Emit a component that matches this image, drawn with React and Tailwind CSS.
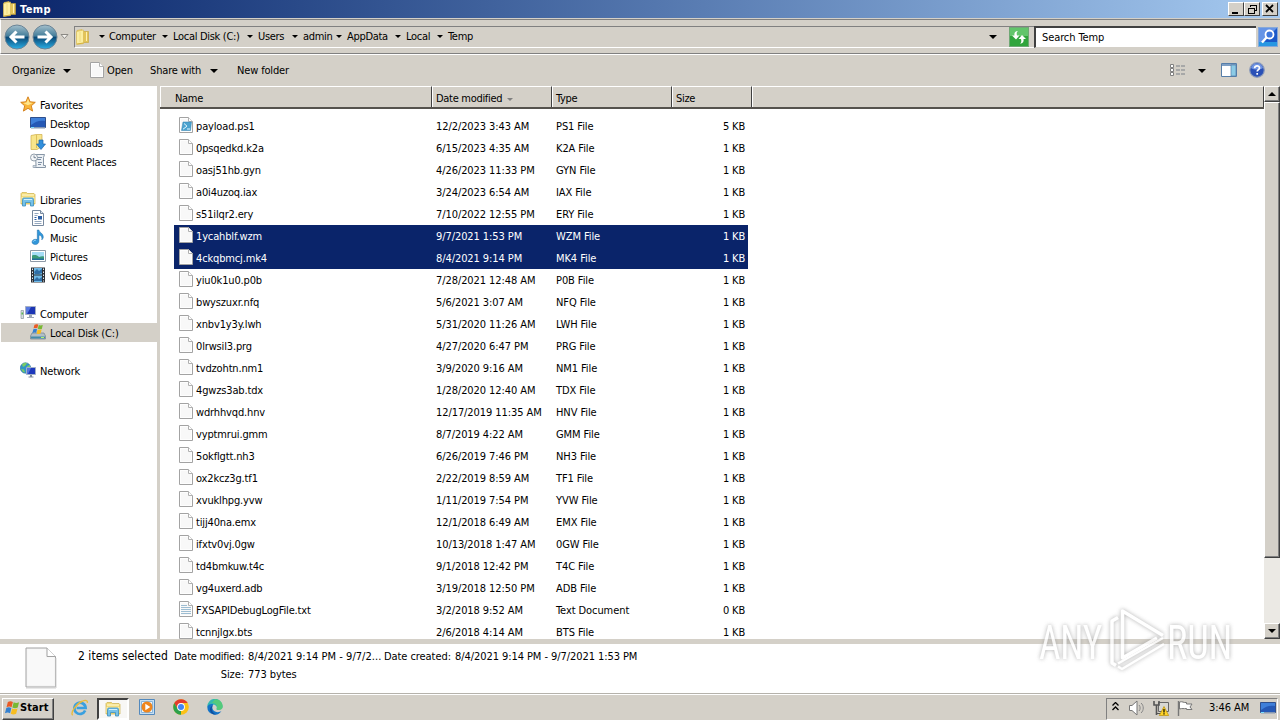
import { useId } from "react";

const files = [
  ["payload.ps1", "12/2/2023 3:43 AM", "PS1 File", "5 KB"],
  ["0psqedkd.k2a", "6/15/2023 4:35 AM", "K2A File", "1 KB"],
  ["oasj51hb.gyn", "4/26/2023 11:33 PM", "GYN File", "1 KB"],
  ["a0i4uzoq.iax", "3/24/2023 6:54 AM", "IAX File", "1 KB"],
  ["s51ilqr2.ery", "7/10/2022 12:55 PM", "ERY File", "1 KB"],
  ["1ycahblf.wzm", "9/7/2021 1:53 PM", "WZM File", "1 KB"],
  ["4ckqbmcj.mk4", "8/4/2021 9:14 PM", "MK4 File", "1 KB"],
  ["yiu0k1u0.p0b", "7/28/2021 12:48 AM", "P0B File", "1 KB"],
  ["bwyszuxr.nfq", "5/6/2021 3:07 AM", "NFQ File", "1 KB"],
  ["xnbv1y3y.lwh", "5/31/2020 11:26 AM", "LWH File", "1 KB"],
  ["0lrwsil3.prg", "4/27/2020 6:47 PM", "PRG File", "1 KB"],
  ["tvdzohtn.nm1", "3/9/2020 9:16 AM", "NM1 File", "1 KB"],
  ["4gwzs3ab.tdx", "1/28/2020 12:40 AM", "TDX File", "1 KB"],
  ["wdrhhvqd.hnv", "12/17/2019 11:35 AM", "HNV File", "1 KB"],
  ["vyptmrui.gmm", "8/7/2019 4:22 AM", "GMM File", "1 KB"],
  ["5okflgtt.nh3", "6/26/2019 7:46 PM", "NH3 File", "1 KB"],
  ["ox2kcz3g.tf1", "2/22/2019 8:59 AM", "TF1 File", "1 KB"],
  ["xvuklhpg.yvw", "1/11/2019 7:54 PM", "YVW File", "1 KB"],
  ["tijj40na.emx", "12/1/2018 6:49 AM", "EMX File", "1 KB"],
  ["ifxtv0vj.0gw", "10/13/2018 1:47 AM", "0GW File", "1 KB"],
  ["td4bmkuw.t4c", "9/1/2018 12:42 PM", "T4C File", "1 KB"],
  ["vg4uxerd.adb", "3/19/2018 12:50 PM", "ADB File", "1 KB"],
  ["FXSAPIDebugLogFile.txt", "3/2/2018 9:52 AM", "Text Document", "0 KB"],
  ["tcnnjlgx.bts", "2/6/2018 4:14 AM", "BTS File", "1 KB"],
];

const selected = ["1ycahblf.wzm", "4ckqbmcj.mk4"];

const crumbs = [
  ["Computer", "w-16"],
  ["Local Disk (C:)", "w-[85px]"],
  ["Users", "w-[45px]"],
  ["admin", "w-11"],
  ["AppData", "w-[59px]"],
  ["Local", "w-[42px]"],
];

const Svg = ({ size = 16, className = "", children }) => (
  <svg width={size} height={size} viewBox="0 0 16 16" className={`shrink-0 ${className}`}>
    {children}
  </svg>
);

const Arrow = ({ className = "text-black" }) => (
  <svg width="8" height="4" viewBox="0 0 8 4" className={`shrink-0 ${className}`}>
    <path d="M0 0h8L4 4z" fill="currentColor" />
  </svg>
);

const SmallArrow = ({ className = "text-black" }) => (
  <svg width="6" height="3" viewBox="0 0 6 3" className={`shrink-0 ${className}`}>
    <path d="M0 0h6L3 3z" fill="currentColor" />
  </svg>
);

const FolderIcon = ({ size = 16 }) => (
  <Svg size={size}>
    <path d="M2 1.5 7 .5v12l-5 2z" fill="#f6e07c" stroke="#d1b045" strokeWidth=".6" />
    <path d="M8 2.5h5.5v11H8z" fill="#e3c458" stroke="#c6a238" strokeWidth=".6" />
    <path d="M1.5 2.5 8.5 1v13.5l-7 1z" fill="#fbeea2" stroke="#d8b94f" strokeWidth=".6" />
    <path d="M11.5 3v9" stroke="#fff0b0" />
    <path d="M5 3v10" stroke="#f0db80" />
    <path d="M2 14.5 8.5 13.5v1L2 15.5z" fill="#d5b23c" />
  </Svg>
);

const PageIcon = ({ kind }) => (
  <svg width="14" height="16" viewBox="0 0 14 16" className="mb-0.5 shrink-0">
    <path d="M.5.5h9l4 4v11H.5z" fill="#fefefe" stroke="#a3a3a3" />
    <path d="M2 2h7v3h3v9H2z" fill="#f8f8f8" />
    <path d="M9.5.5v4h4" fill="#fff" stroke="#b0b0b0" />
    {kind === "txt" && <path d="M2 4.5h6M2 6.5h10M2 8.5h10M2 10.5h10M2 12.5h10" stroke="#9dbdd2" />}
    {kind === "ps1" && (
      <g>
        <path d="M4 5h8.5l-1 8.5h-9z" fill="#4ba3cf" stroke="#2c7fae" strokeWidth=".5" />
        <path d="m5 6.5 3 2.7-4 3M8 12h3" stroke="#e4f6ff" fill="none" />
      </g>
    )}
  </svg>
);

const StarIcon = () => (
  <Svg>
    <path d="m8 .8 2.1 5 5.2.5-4 3.5 1.3 5.3L8 12.3l-4.6 2.8 1.3-5.3-4-3.5 5.2-.5z" fill="#f9b53a" stroke="#d17a14" strokeWidth=".9" />
    <path d="M8 2.8 9.4 6.6l3.4.4L8 9.3 3.2 7l3.4-.4z" fill="#ffe68d" />
  </Svg>
);

const DesktopIcon = () => (
  <Svg>
    <path d="M.5 2.5h15v10H.5z" fill="#2558b5" stroke="#2f4f8c" />
    <path d="M1 3h14v3C10 5 6 6 1 10z" fill="#3f7fd9" />
    <path d="M1 12h14v1.5H1z" fill="#8798b2" />
    <path d="M1 12.5h3" stroke="#7ce0ff" />
  </Svg>
);

const DownloadsIcon = () => (
  <Svg>
    <path d="M1 1.5 6 .5h6v12l-5 3H1z" fill="#f8e58b" stroke="#cfae48" strokeWidth=".7" />
    <path d="M6.5 1v13" stroke="#dcbf58" />
    <path d="M9 6h4v4h2.5L11 15.5 6.5 10H9z" fill="#318fdc" stroke="#1c64aa" strokeWidth=".7" />
  </Svg>
);

const RecentIcon = () => (
  <Svg>
    <path d="M5.5 1.5h9l-1 3v8h2v2h-11l1.5-2z" fill="#edf1f5" stroke="#8796a6" />
    <path d="M7 4.5h5M7 6.5h4M8 9.5h4M8 11.5h3" stroke="#7f90a5" />
    <circle cx="4" cy="4.5" r="3.5" fill="#f5f7f9" stroke="#93a0ac" />
    <path d="M4 2.5v2.2h2" stroke="#58697d" fill="none" strokeWidth=".8" />
    <path d="M3 12.5h3v2H3z" fill="#d2dae2" stroke="#8796a6" strokeWidth=".6" />
  </Svg>
);

const LibraryIcon = ({ size = 16 }) => (
  <Svg size={size}>
    <path d="M1 2.5 2 1.5h4.5l1 1H14l1 1V13H1z" fill="#f3dc7b" stroke="#ccb04c" strokeWidth=".7" />
    <path d="M2 4h12" stroke="#fffbd8" />
    <path d="M1.5 6h13v6h-13z" fill="#f9eda9" />
    <path d="M2.5 8.5c0-1 .5-1.5 1.5-1.5h8c1 0 1.5.5 1.5 1.5V15h-3v-3.5h-5V15h-3z" fill="#75c1e9" stroke="#3b8dbb" strokeWidth=".8" />
    <path d="M4 8.5h8" stroke="#d1f1ff" />
  </Svg>
);

const DocumentsIcon = () => (
  <Svg>
    <path d="M2.5.5h8l3 3v12h-11z" fill="#fff" stroke="#76889e" />
    <path d="M10.5.5v3h3" fill="#dce5ef" stroke="#76889e" />
    <path d="M4.5 3.5h4M4.5 5.5h3M4.5 11.5h7M4.5 13.5h7" stroke="#94a8c0" />
    <path d="M8 6h4v3.5H8z" fill="#2c5fa5" />
    <path d="M4.5 7.5h2M4.5 9.5h2" stroke="#2c5fa5" />
  </Svg>
);

const MusicIcon = () => (
  <Svg>
    <path d="M7.3 1h1.6c.3 2.6 4.8 3.4 4.4 7.3-.2 1.2-.9 2-1.5 2.6.7-2.6-.7-4.5-2.9-4.9v6.2c0 1.9-1.5 3.3-3.5 3.3S2 14.5 2 13s1.5-2.7 3.5-2.7c.7 0 1.3.1 1.8.3z" fill="#3197da" stroke="#1d6da8" strokeWidth=".5" />
    <path d="M3.3 12.5c.4-.9 1.2-1.2 2.4-1.2" stroke="#a6e0ff" fill="none" />
  </Svg>
);

const PicturesIcon = () => (
  <Svg>
    <path d="M.5 2.5h15v11H.5z" fill="#fff" stroke="#8f9aa7" />
    <path d="M2 4h12v8H2z" fill="#a5dcf5" />
    <path d="M2 7.5c3-1 5-.5 7 1.5 2-1 4-1 5-.5V12H2z" fill="#3b9a79" />
    <path d="M2 10.5h12V12H2z" fill="#226d9d" />
  </Svg>
);

const VideosIcon = () => (
  <Svg>
    <path d="M1 .5h14v15H1z" fill="#2c3036" />
    <path d="M4 1h8v6.5H4zM4 8.5h8V15H4z" fill="#6fb9e6" />
    <path d="m4 5 3-3 2 2 3-2v4L9 7H5zM4 13l3-3 2 2 3-2v4H4z" fill="#2f6ea6" />
    <path d="M2.5 1.5v13M13.5 1.5v13" stroke="#e6edf2" strokeDasharray="1.5 1.5" />
  </Svg>
);

const ComputerIcon = () => (
  <Svg>
    <path d="M5.5 1.5h10v8h-10z" fill="#1c35b4" stroke="#a5afc4" />
    <path d="M6 2h5L7 9H6z" fill="#5778e0" />
    <path d="M9 10h3v2h2v1H7v-1h2z" fill="#9ca6b5" />
    <path d="M1 5.5h2.5v8H1z" fill="#d6dde0" stroke="#8a959d" strokeWidth=".7" />
    <path d="M1.5 8.5H3" stroke="#59bb4e" strokeWidth="2" />
  </Svg>
);

const Flag = ({ transform }) => (
  <g transform={transform}>
    <path d="M3 1c1.5-1 3-1 4.500-.2L6.300 5.500C5 4.700 3.500 4.700 1.800 5.500z" fill="#ea5a25" />
    <path d="M8.200 1.200c1.500.8 3 .8 4.800 0l-1.200 4.700c-1.800.8-3.300.7-4.800-.1z" fill="#78b833" />
    <path d="M1.600 6.300c1.500-.9 3-.8 4.500 0L5 10.900C3.500 10.100 2 10.100.4 11z" fill="#3480d0" />
    <path d="M6.800 6.600c1.500.8 3 .9 4.800.1l-1.200 4.700c-1.800.8-3.300.7-4.800-.1z" fill="#f7bd21" />
  </g>
);

const DiskIcon = () => (
  <Svg>
    <path d="M2 9h12l1.500 3v3H.5v-3z" fill="#b1bec6" stroke="#72828d" strokeWidth=".7" />
    <path d="M1 12.500h14v2H1z" fill="#438ba9" />
    <path d="M11 13.500h3" stroke="#b2f56d" />
    <Flag transform="translate(2 0) scale(.83)" />
  </Svg>
);

const NetworkIcon = () => (
  <Svg>
    <circle cx="5.5" cy="6" r="5.2" fill="#3194c8" stroke="#266c96" strokeWidth=".6" />
    <path d="M2 2.5c2-2 4-2 5-1L5 4 3 5zM1 7l3 .5 1 3-2-.5zM7 4l3-1v3L8 7z" fill="#79cc65" />
    <path d="M6.5 5.5h9v7h-9z" fill="#1d38bd" stroke="#a2b0c7" />
    <path d="M7 6h4l-3 6H7z" fill="#5374dd" />
    <path d="M10 13h2v1.5h1.5v1h-5v-1H10z" fill="#7f8c9c" />
  </Svg>
);

const NavButton = ({ back }) => {
  const id = useId();
  return (
    <svg width="26" height="26" viewBox="0 0 26 26" className="shrink-0">
      <defs>
        <linearGradient id={id} x1="0" y1="0" x2="0" y2="1">
          <stop offset="0" stopColor="#a5c0cc" />
          <stop offset=".45" stopColor="#457e9b" />
          <stop offset=".52" stopColor="#0b4a78" />
          <stop offset="1" stopColor="#2bb0e6" />
        </linearGradient>
      </defs>
      <circle cx="13" cy="13" r="12" fill={`url(#${id})`} stroke="#6b8496" />
      <g transform={back ? undefined : "matrix(-1 0 0 1 26 0)"}>
        <path d="M20.5 13H7M12.5 7.5 7 13l5.5 5.5" fill="none" stroke="#fff" strokeWidth="3" />
      </g>
    </svg>
  );
};

const IEIcon = () => (
  <Svg size={18}>
    <path d="M12.6 10.3A5 5 0 1 1 13 8H5" fill="none" stroke="#3aa0df" strokeWidth="2.4" />
    <path d="M1.5 14.5C-1 12 5 4 10 2c3-1.3 5-.8 4.5 1.5" fill="none" stroke="#e9bb3b" strokeWidth="1.2" />
  </Svg>
);

const PlayerIcon = () => (
  <Svg>
    <path d="M.5.5h15v15H.5z" fill="#c6dff2" stroke="#5389bd" />
    <path d="M2.5 2.5h11v11h-11z" fill="#eef7fd" stroke="#88b4da" />
    <circle cx="8" cy="8" r="5.5" fill="#ef861e" />
    <path d="m6.3 4.8 5 3.2-5 3.2z" fill="#fff" />
  </Svg>
);

const ChromeIcon = () => (
  <Svg>
    <circle cx="8" cy="8" r="7.8" fill="#fbc116" />
    <path d="M8 8 1.25 4.1A7.8 7.8 0 0 1 14.75 4.1H8z" fill="#e33b2e" />
    <path d="M1.25 4.1 4.7 10 8 8 8 4.1z" fill="#e33b2e" />
    <path d="M1.25 4.1 4.7 10 8 11.8 8 15.8A7.8 7.8 0 0 1 1.25 4.1z" fill="#2da14c" />
    <circle cx="8" cy="8" r="3.9" fill="#fff" />
    <circle cx="8" cy="8" r="3" fill="#4285f4" />
  </Svg>
);

const EdgeIcon = () => (
  <Svg>
    <path d="M.3 8A7.7 7.7 0 0 1 15.7 7c.2 3-2 4-4 4-2 0-2.5-.8-2-1.5C10.5 7 8 5 5 5.5 2.5 6 .8 7.5.3 8z" fill="#35b9b0" />
    <path d="M8 .3c5 0 7.5 3.5 7.7 6.7.2 3-2 4-4 4-2 0-2.5-.8-2-1.5C11 6 8 4 5 4z" fill="#5fd06a" opacity=".75" />
    <path d="M.3 8C1 5.5 4 4.5 6.5 5.5 4.5 7 5 11 8 12.5c2.5 1.2 5 .5 6.5-.5A7.7 7.7 0 0 1 .3 8z" fill="#1373c8" />
    <path d="M6 6.5c-2.5 2.5-1 7.5 3 9-4 .5-6-2.5-6-5C3 8.5 4.5 7 6 6.5z" fill="#0e4f9d" />
  </Svg>
);

const sidebar = [
  ["Favorites", StarIcon, 0],
  ["Desktop", DesktopIcon, 1],
  ["Downloads", DownloadsIcon, 1],
  ["Recent Places", RecentIcon, 1],
  null,
  ["Libraries", LibraryIcon, 0],
  ["Documents", DocumentsIcon, 1],
  ["Music", MusicIcon, 1],
  ["Pictures", PicturesIcon, 1],
  ["Videos", VideosIcon, 1],
  null,
  ["Computer", ComputerIcon, 0],
  ["Local Disk (C:)", DiskIcon, 1],
  null,
  ["Network", NetworkIcon, 0],
];

const TitleBar = () => (
  <div className="flex h-[18px] shrink-0 items-center bg-linear-to-r from-[#0a246a] to-[#a6caf0] px-0.5">
    <FolderIcon />
    <span className="ml-0.5 flex-1 pt-0.5 text-[11px] font-bold tracking-[0.4px] text-white">Temp</span>
    {["min", "max", "close"].map((kind) => (
      <div
        key={kind}
        className={`h-3.5 w-4 border border-t-white border-l-white border-r-[#404040] border-b-[#404040] bg-[#d4d0c8] ${kind === "close" ? "ml-0.5" : ""}`}
      >
        <svg width="14" height="12" viewBox="0 0 14 12" shapeRendering="crispEdges">
          {kind === "min" && <path d="M3 9h6v2H3z" />}
          {kind === "max" && <path d="M5 2h6v5H9M5 2v2M5 2.5h6M3 5.5h6M3 5v5h6V5" fill="none" stroke="#000" />}
          {kind === "close" && <path d="m3 2 7 7m0-7L3 9" stroke="#000" strokeWidth="1.8" shapeRendering="auto" />}
        </svg>
      </div>
    ))}
  </div>
);

const AddressBar = () => (
  <div className="mt-px flex h-[35px] shrink-0 items-center border-t border-b border-l border-t-[#808080] border-b-[#808080] border-l-white bg-[#d4d0c8] pl-[3px] pr-0.5">
    <NavButton back />
    <div className="ml-0.5">
      <NavButton />
    </div>
    <svg width="9" height="6" viewBox="0 0 9 6" className="ml-0.5 shrink-0">
      <path d="M1 .5h7L4.5 4.5z" fill="#f4f2ee" stroke="#8b8984" />
    </svg>
    <div className="ml-[5px] flex h-[22px] w-[960px] shrink-0 items-center border-t border-b border-l border-t-[#808080] border-l-[#808080] border-b-white text-[11px]">
      <FolderIcon />
      <div className="ml-1.5 flex w-[9px] justify-center">
        <SmallArrow />
      </div>
      <div className="ml-[3px] flex flex-1 items-center">
        {crumbs.map(([name, width]) => (
          <div key={name} className={`flex items-center justify-between pr-[5px] whitespace-nowrap ${width}`}>
            <span className="pt-0.5">{name}</span>
            <SmallArrow />
          </div>
        ))}
        <span className="pt-0.5">Temp</span>
      </div>
      <Arrow />
      <svg width="20" height="20" viewBox="0 0 20 20" className="mr-[5px] ml-3 shrink-0">
        <rect x=".5" y=".5" width="19" height="19" fill="#31a53d" stroke="#6fa875" />
        <path d="M1 1h18v8H1z" fill="#62c56b" />
        <path d="M9 4C6 4 5 6 5.5 8.5H3l4 4 3.5-4H8C7.5 6.5 7.5 5 9 4z" fill="#fff" />
        <path d="M11 16.5c3 0 4-2 3.500-4.500H17l-4-4-3.500 4H12c.5 2 .5 3.500-1 4.500z" fill="#fff" />
      </svg>
    </div>
    <div className="flex h-[22px] flex-1 items-center border-t-2 border-l-2 border-b border-t-[#404040] border-l-[#404040] border-b-[#d4d0c8] bg-white pt-0.5 pl-1.5 text-[11px] tracking-[-0.1px]">
      Search Temp
    </div>
    <svg width="20" height="20" viewBox="0 0 20 20" className="ml-0.5 shrink-0">
      <rect x=".5" y=".5" width="19" height="19" fill="#1a58c8" stroke="#86a8d8" />
      <path d="M1 1h18L1 19z" fill="#6594e6" />
      <path d="M1 15h18v4H1z" fill="#2897e2" />
      <circle cx="11.5" cy="7.5" r="4" fill="#3d76dc" stroke="#fff" strokeWidth="1.8" />
      <path d="m8.500 10.500-4.500 5" stroke="#fff" strokeWidth="2.400" />
    </svg>
  </div>
);

const Toolbar = () => (
  <div className="flex h-8 shrink-0 items-center border-t border-white bg-[#d4d0c8] pl-3 pr-[15px] text-[11px] tracking-[-0.15px] whitespace-nowrap">
    <span className="w-[51px] pt-px">Organize</span>
    <Arrow />
    <div className="ml-[19px] flex w-[60px] items-center gap-[3px]">
      <PageIcon />
      <span className="pt-px">Open</span>
    </div>
    <span className="w-[60px] pt-px">Share with</span>
    <Arrow />
    <span className="ml-[19px] flex-1 pt-px">New folder</span>
    <Svg className="mb-0.5">
      <path d="M.5 2.500h3v3h-3zM.5 6.500h3v3h-3zM.5 10.500h3v3h-3z" fill="#fff" stroke="#808080" />
      <path d="M6 4h4M6 8h4M6 12h4M11 4h4M11 8h4M11 12h4" stroke="#7b8088" />
    </Svg>
    <div className="mr-[15px] ml-3">
      <Arrow />
    </div>
    <Svg className="mb-0.5">
      <path d="M.5 1.500h15v13H.5z" fill="#fff" stroke="#557da8" />
      <path d="M1 2h14v2H1z" fill="#7e9fc4" />
      <path d="M10 3h5v11h-5z" fill="#8bcbe6" stroke="#557da8" strokeWidth=".7" />
    </Svg>
    <svg width="16" height="16" viewBox="0 0 16 16" className="mb-0.5 ml-3 shrink-0">
      <circle cx="8" cy="8" r="7.300" fill="#2a50b6" stroke="#8d9cba" strokeWidth="1.200" />
      <path d="M2 6a6.300 6.300 0 0 1 12 0C11 8 5 8 2 6z" fill="#6f93e2" />
      <path d="M5.600 6.200C5.600 3 10.500 3.200 10.500 6 10.500 7.700 8.200 7.700 8.200 9.600M8.200 11v1.700" fill="none" stroke="#fff" strokeWidth="1.700" />
    </svg>
  </div>
);

const Sidebar = () => (
  <div className="w-40 shrink-0 border-r-[3px] border-[#d4d0c8] bg-white pt-[9px] text-[11px] tracking-[-0.17px]">
    {sidebar.map((item, i) => {
      if (!item) return <div key={i} className="h-[19px]" />;
      const [name, Icon, level] = item;
      return (
        <div
          key={i}
          className={`ml-px flex h-[19px] items-center gap-1 whitespace-nowrap ${level ? "pl-[29px]" : "pl-[19px]"} ${name.startsWith("Local") ? "bg-[#d4d0c8]" : ""}`}
        >
          <div className="mb-0.5">
            <Icon />
          </div>
          <span className="pt-1">{name}</span>
        </div>
      );
    })}
  </div>
);

const HeaderCell = ({ children, className }) => (
  <div className={`flex h-full items-center border-t border-r border-l border-t-white border-l-white border-r-[#404040] pt-1 ${className}`}>
    {children}
  </div>
);

const bevel = "border border-t-white border-l-white border-r-[#404040] border-b-[#404040] bg-[#d4d0c8] shadow-[inset_-1px_-1px_0_#808080]";

const Scrollbar = () => (
  <div className="flex w-4 shrink-0 flex-col bg-[#ebe9e4]">
    <div className={`flex h-4 items-center justify-center ${bevel}`}>
      <svg width="8" height="4" viewBox="0 0 8 4">
        <path d="M0 4h8L4 0z" />
      </svg>
    </div>
    <div className={`h-[456px] ${bevel}`} />
    <div className="flex-1" />
    <div className={`flex h-4 items-center justify-center ${bevel}`}>
      <Arrow />
    </div>
  </div>
);

const FileList = () => (
  <div className="flex min-w-0 flex-1 flex-col overflow-hidden bg-white text-[11px]">
    <div className="flex h-[23px] shrink-0 border-b-2 border-[#55524d] bg-[#d4d0c8]">
      <HeaderCell className="w-[272px] pl-3.5">Name</HeaderCell>
      <HeaderCell className="w-[120px] gap-[5px] pl-[3px]">
        Date modified
        <SmallArrow className="text-[#808080]" />
      </HeaderCell>
      <HeaderCell className="w-[120px] pl-[3px]">Type</HeaderCell>
      <HeaderCell className="w-20 pl-[3px]">Size</HeaderCell>
      <HeaderCell className="flex-1" />
    </div>
    <div className="pt-1.5 pl-3.5">
      {files.map(([name, date, type, size]) => (
        <div
          key={name}
          className={`flex h-[22px] w-[574px] items-center pl-[5px] whitespace-nowrap ${selected.includes(name) ? "bg-[#0a246a] text-white" : ""}`}
        >
          <div className="flex w-[257px] items-center gap-[3px]">
            <PageIcon kind={name.split(".")[1]} />
            <span className="pt-[3px] tracking-[-0.15px]">{name}</span>
          </div>
          <span className="w-[120px] pt-[3px] tracking-[-0.08px]">{date}</span>
          <span className="flex-1 pt-[3px] tracking-[-0.08px]">{type}</span>
          <span className="pt-[3px] pr-[3px] tracking-[-0.2px]">{size}</span>
        </div>
      ))}
    </div>
  </div>
);

const DetailsPane = () => (
  <div className="flex h-[49px] shrink-0 bg-white pl-[25px] text-[11px] tracking-[-0.07px] whitespace-nowrap">
    <svg width="32" height="42" viewBox="0 0 32 42" className="mt-[3px] shrink-0">
      <path d="M1 1h21l8.500 8.500V40H1z" fill="#f5f5f5" stroke="#a2a2a2" />
      <path d="M2.500 2.500h18.500v8h8V38H2.500z" fill="#f9f9f9" />
      <path d="M22 1v8.500h8.500" fill="#fff" stroke="#a2a2a2" />
      <path d="M1 41h30V11" fill="none" stroke="#d2d2d2" />
    </svg>
    <div className="mt-1 ml-[21px] w-24 text-[12px] leading-4 tracking-[0.03px]">2 items selected</div>
    <div className="mt-[5px] leading-4">
      <div className="flex">
        <span className="w-[74px] tracking-[-0.25px]">Date modified:</span>
        <span className="w-[136px] tracking-[0.04px]">8/4/2021 9:14 PM - 9/7/2...</span>
        <span className="w-[71px]">Date created:</span>
        <span>8/4/2021 9:14 PM - 9/7/2021 1:53 PM</span>
      </div>
      <div className="mt-0.5 flex">
        <span className="w-[74px] pr-1 text-right">Size:</span>
        <span>773 bytes</span>
      </div>
    </div>
  </div>
);

const Taskbar = () => (
  <div className="flex h-7 shrink-0 items-center border-t border-[#b5b2ab] bg-[#d4d0c8] px-0.5 shadow-[inset_0_1px_0_#fff]">
    <div className="mt-0.5 flex h-[22px] w-[52px] items-center border border-t-white border-l-white border-r-[#404040] border-b-[#404040] pl-px shadow-[inset_-1px_-1px_0_#808080]">
      <Svg className="mb-0.5">
        <Flag transform="translate(.5 1) scale(1.120)" />
      </Svg>
      <span className="text-[11px] font-bold tracking-[0.1px]">Start</span>
    </div>
    <div className="ml-[17px]">
      <IEIcon />
    </div>
    <div className="mt-0.5 ml-2 flex h-[22px] w-8 items-center justify-center border-2 border-t-[#404040] border-l-[#404040] border-r-white border-b-white bg-[#f8f7f5]">
      <LibraryIcon />
    </div>
    <div className="mb-0.5 ml-2.5 flex flex-1 gap-[18px]">
      <PlayerIcon />
      <ChromeIcon />
      <EdgeIcon />
    </div>
    <div className="mt-0.5 flex h-[22px] w-[172px] items-center border border-t-[#808080] border-l-[#808080] border-r-white border-b-white pl-[5px]">
      <svg width="7" height="9" viewBox="0 0 7 9" className="mr-2.5 mb-1 shrink-0">
        <path d="m.5 3.500 3-3 3 3M.5 8l3-3 3 3" fill="none" stroke="#000" strokeWidth="1.300" />
      </svg>
      <Svg className="mb-0.5">
        <path d="M.5 5.500H3L8 1v14l-5-4.500H.5z" fill="#fff" stroke="#777" />
        <path d="M10 5c1.500 1.500 1.500 4.500 0 6M12 3c3 2.500 3 7.500 0 10" fill="none" stroke="#888" />
      </Svg>
      <Svg className="mb-0.5 ml-2">
        <path d="M5.500 2.500h10v9h-10z" fill="#d8d8d4" stroke="#666" />
        <path d="M1 1v4h5V1M3.500 5v10" fill="none" stroke="#555" strokeWidth="1.600" />
        <path d="M3.500 13.500H8" stroke="#555" />
        <path d="m11 6.500 4.700 9H6.300z" fill="#ffd42a" stroke="#b98e09" strokeWidth=".7" />
        <path d="M11 9v3.500M11 13.300v1.200" stroke="#000" strokeWidth="1.200" />
      </Svg>
      <Svg className="mb-0.5 ml-2">
        <path d="M1.500 1v15" stroke="#777" strokeWidth="1.400" />
        <path d="M2.500 2c3-1 4 1 7 .5V4H15l-2 3 2 2.500H9.500v-1c-3 .5-4-.5-7 .5z" fill="#fff" stroke="#777" />
      </Svg>
      <span className="ml-4 w-[51px] text-[11px] tracking-[-0.05px] whitespace-nowrap">3:46 AM</span>
      <div className="mb-0.5">
        <DesktopIcon />
      </div>
    </div>
  </div>
);

const Watermark = () => (
  <svg
    width="240"
    height="84"
    viewBox="0 0 240 84"
    className="pointer-events-none absolute top-[600px] left-[1020px] opacity-80 drop-shadow-[0_0_2px_#9a9a9a]"
  >
    <g fill="#fff" fontFamily="Roboto, sans-serif" fontSize="48" fontWeight="400">
      <text x="19" y="59" textLength="63" lengthAdjust="spacingAndGlyphs">ANY</text>
      <text x="147" y="59" textLength="65" lengthAdjust="spacingAndGlyphs">RUN</text>
    </g>
    <g fill="none" stroke="#fff" strokeWidth="3.500" strokeLinejoin="round">
      <path d="M98 17.500 92 21v42l4 2.500" />
      <path d="M143 35.500 102.500 11v47L137 38" />
      <path d="M143 38 98 63.500M144 44l-42 25-4-2.500" strokeWidth="2.500" />
    </g>
  </svg>
);

export default function App() {
  return (
    <div className="relative flex h-[720px] w-[1280px] flex-col overflow-hidden bg-[#d4d0c8] font-['DejaVu_Sans_Condensed','DejaVu_Sans',sans-serif] tracking-[-0.3px] text-black [font-stretch:condensed]">
      <TitleBar />
      <AddressBar />
      <Toolbar />
      <div className="flex h-[553px] shrink-0">
        <Sidebar />
        <FileList />
        <Scrollbar />
      </div>
      <div className="h-[5px] shrink-0 bg-[#d4d0c8]" />
      <DetailsPane />
      <Taskbar />
      <Watermark />
    </div>
  );
}
